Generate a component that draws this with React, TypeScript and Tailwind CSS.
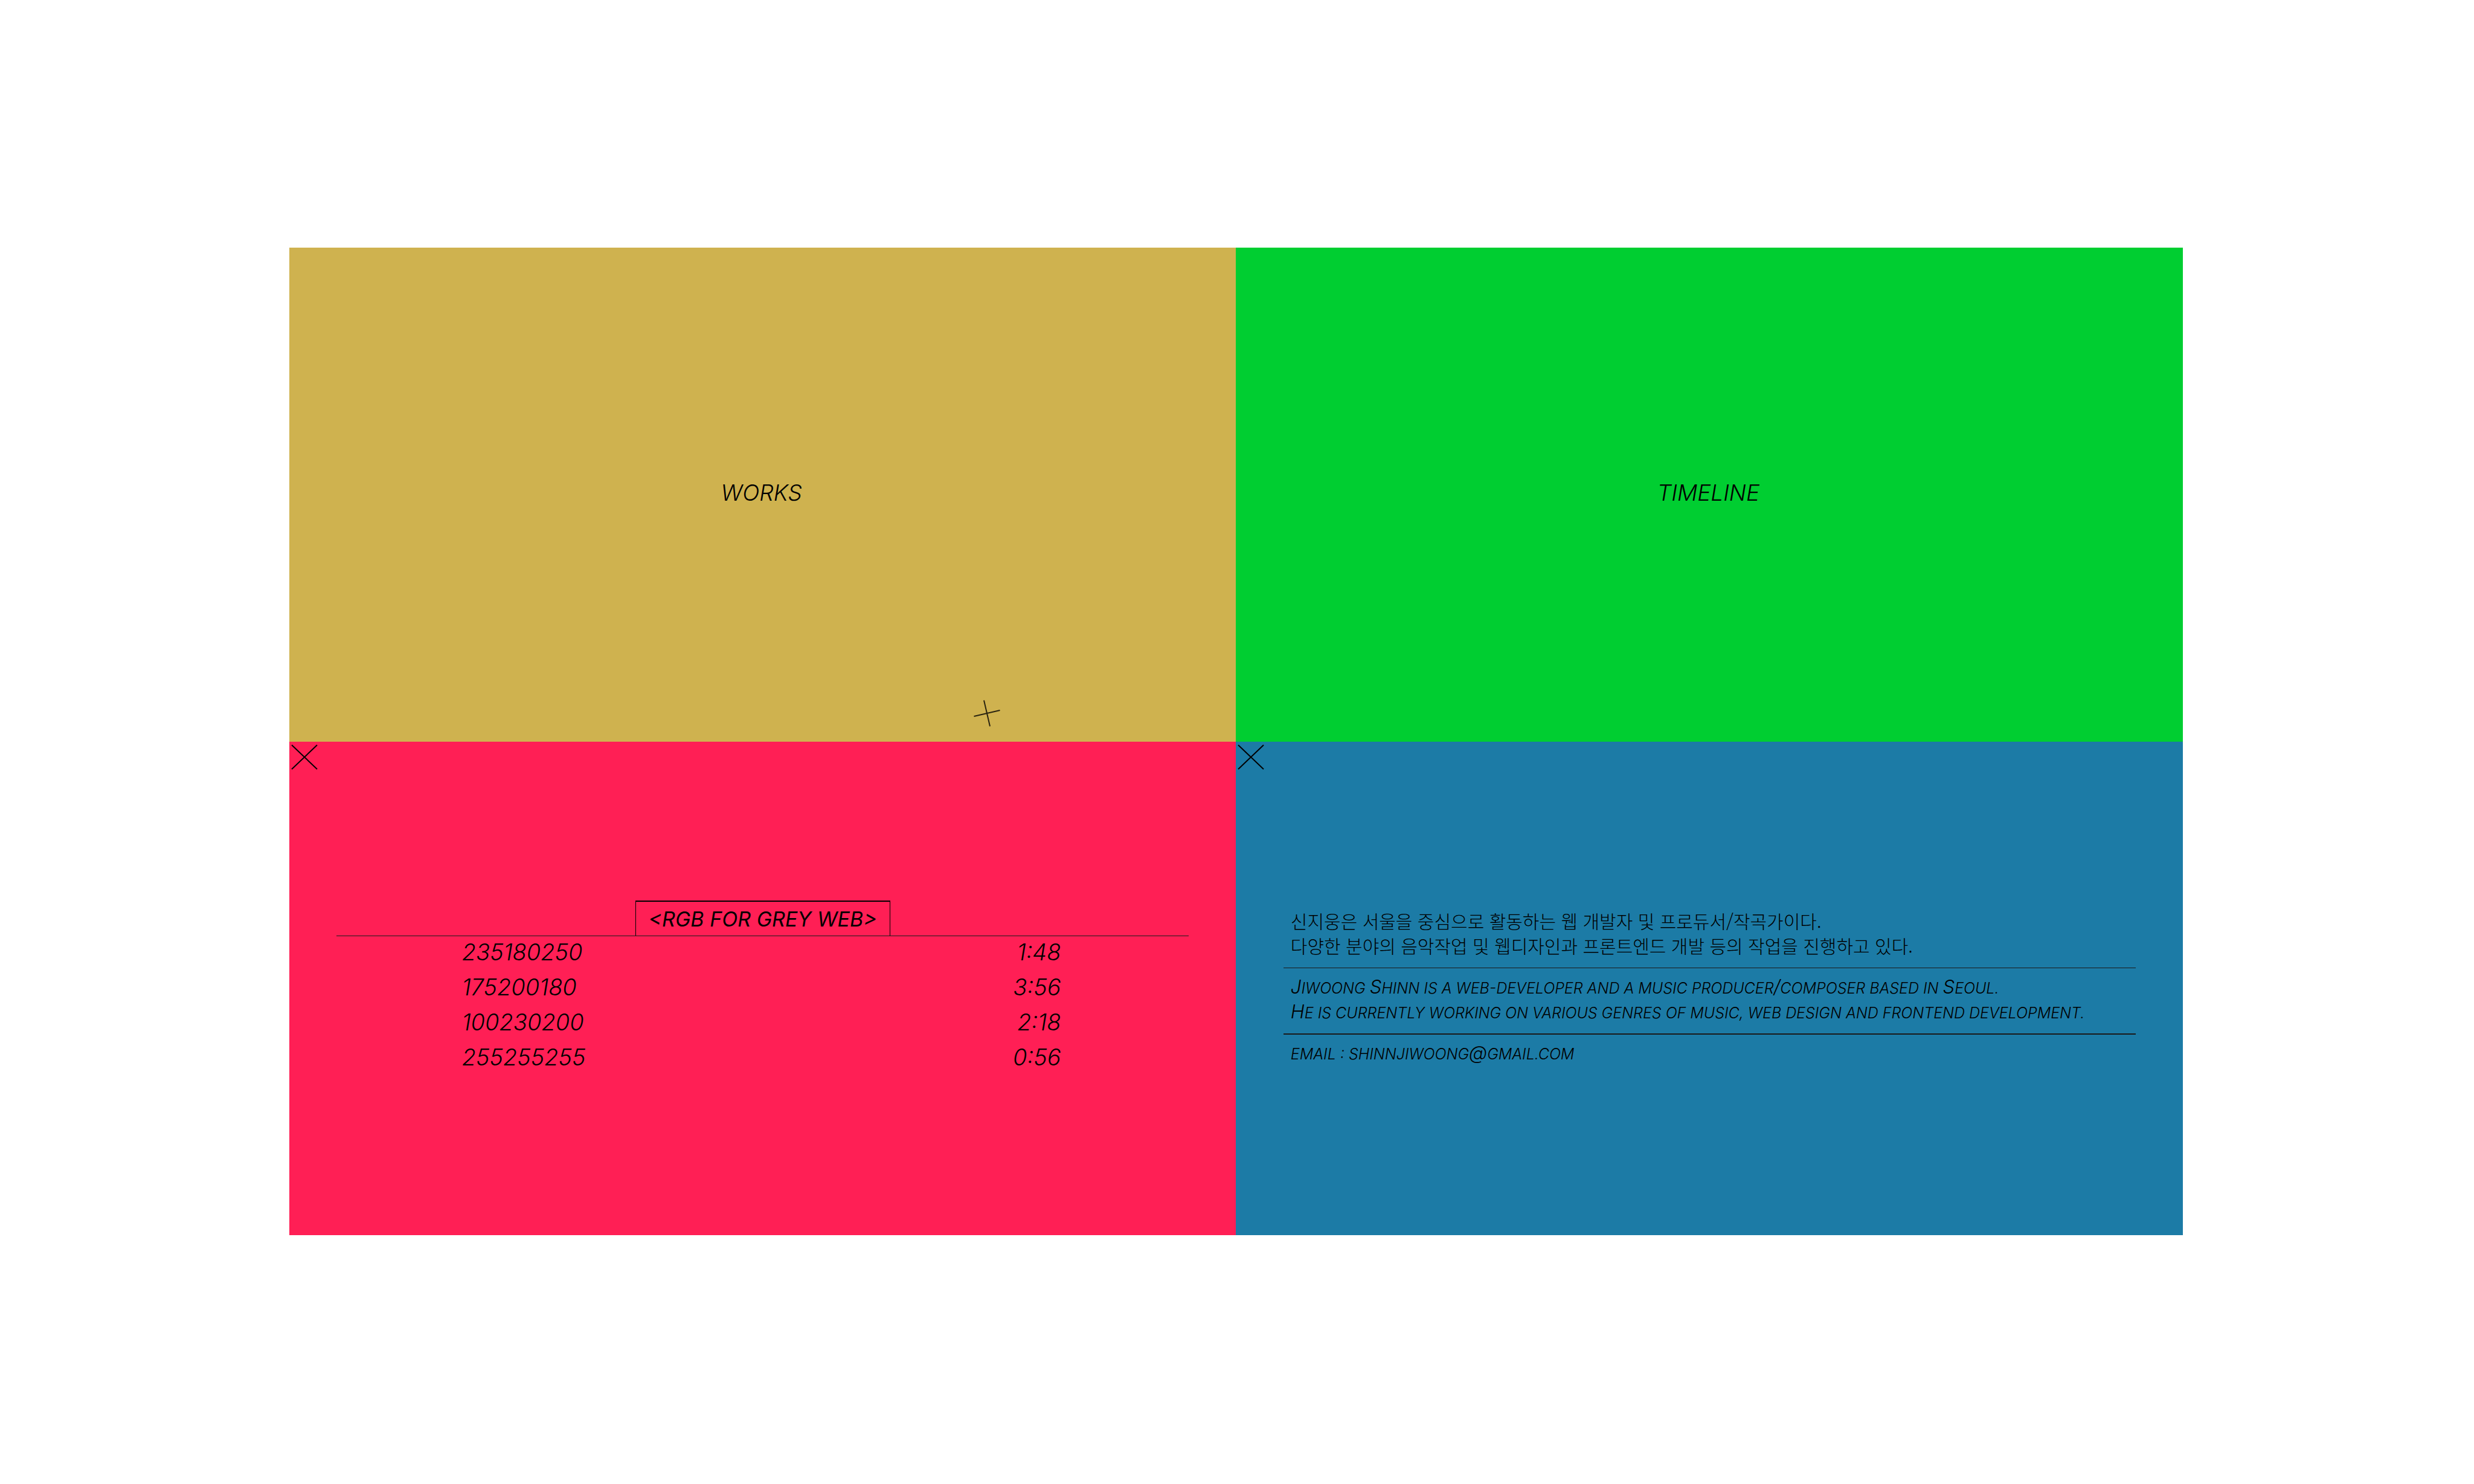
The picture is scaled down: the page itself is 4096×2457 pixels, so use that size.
const tracks = [
  { title: "235180250", time: "1:48" },
  { title: "175200180", time: "3:56" },
  { title: "100230200", time: "2:18" },
  { title: "255255255", time: "0:56" },
];

function CloseButton({ label }: { label: string }) {
  return (
    <button type="button" aria-label={label} className="absolute left-[3px] top-1 size-[44px]">
      <svg viewBox="0 0 44 44" className="size-full" fill="none" stroke="#000" strokeWidth="2">
        <path d="M1 1.5L43 41.5M43 1.5L1 41.5" />
      </svg>
    </button>
  );
}

function CrossCursor() {
  return (
    <svg
      viewBox="0 0 48 48"
      className="pointer-events-none absolute bottom-[23px] left-[73.7%] size-[48px] -translate-x-1/2"
      fill="none"
      stroke="#000"
      strokeOpacity="0.8"
      strokeWidth="2"
    >
      <path d="M2.5 29L45.5 19M19 2.5L29 45.5" />
    </svg>
  );
}

function Cap({ children }: { children: string }) {
  return <span className="text-[31px] font-light leading-none">{children}</span>;
}

export default function App() {
  return (
    <div className="flex min-h-screen items-center justify-center bg-white pb-0.5 pr-[3px] font-['Inter','Noto_Sans_CJK_KR',sans-serif] font-light text-black">
      <main className="grid h-[66.55vh] w-[76.6%] grid-cols-2 grid-rows-2">
        <section className="relative grid bg-[#cfb24f]">
          <button type="button" className="pb-1.5 pr-1 text-[37px] italic">
            WORKS
          </button>
          <CrossCursor />
        </section>

        <section className="grid bg-[#00ce31]">
          <button type="button" className="pb-1.5 pr-1 text-[37px] italic">
            TIMELINE
          </button>
        </section>

        <section className="relative flex flex-col items-center justify-center bg-[#ff1f55]">
          <CloseButton label="Close album" />
          <div className="flex w-[90%] flex-col items-center">
            <h2 className="h-[58px] border-x border-t-2 border-black px-[21px] text-[34px] font-normal leading-[58px] italic">
              &lt;RGB FOR GREY WEB&gt;
            </h2>
            <div className="w-full border-t border-[#1a1a1a] pl-[14.7%] pr-[15%]">
              <table className="w-full text-[38px] leading-[53px] italic">
                <tbody>
                  {tracks.map((t) => (
                    <tr key={t.title}>
                      <td className="p-0 pb-[5px] text-left">{t.title}</td>
                      <td className="p-0 pb-[5px] text-right">{t.time}</td>
                    </tr>
                  ))}
                </tbody>
              </table>
            </div>
          </div>
        </section>

        <section className="relative flex flex-col items-center justify-center bg-[#1c7ba6]">
          <CloseButton label="Close about" />
          <div className="w-[90%] text-[25px] leading-[41px]">
            <p lang="ko" className="border-b border-[#1a1a1a] px-3 pb-4 pt-2.5 font-['Noto_Sans_CJK_KR',sans-serif] text-[30px]">
              신지웅은 서울을 중심으로 활동하는 웹 개발자 및 프로듀서/작곡가이다.
              <br />
              다양한 분야의 음악작업 및 웹디자인과 프론트엔드 개발 등의 작업을 진행하고 있다.
            </p>
            <p className="border-b-2 border-[#1a1a1a] px-3 py-[13px] font-[350] uppercase italic">
              <Cap>J</Cap>iwoong <Cap>S</Cap>hinn is a web-developer and a music producer<Cap>/</Cap>composer based in <Cap>S</Cap>eoul.
              <br />
              <Cap>H</Cap>e is currently working on various genres of music, web design and frontend development.
            </p>
            <p className="px-3 pb-[13px] pt-3 font-[350] uppercase italic">
              email : <a href="mailto:shinnjiwoong@gmail.com">shinnjiwoong<Cap>@</Cap>gmail.com</a>
            </p>
          </div>
        </section>
      </main>
    </div>
  );
}
